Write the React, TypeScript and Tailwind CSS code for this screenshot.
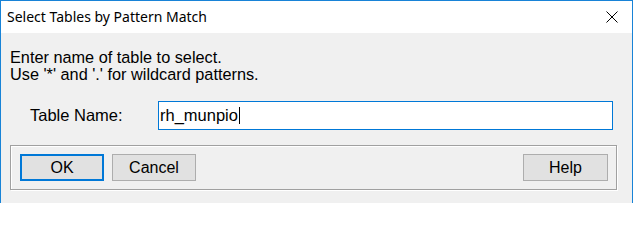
export default function App() {
  return (
    <div className="flex h-[203px] w-[633px] flex-col border-x border-t border-[#1883d7] bg-[#f0f0f0] text-black" style={{ fontFamily: '"Liberation Sans", Arial, sans-serif' }}>
      {/* Title bar */}
      <div className="flex h-[32px] shrink-0 items-center justify-between bg-white pl-[6px] pr-[14px]">
        <div className="text-[14px] leading-none" style={{ fontFamily: '"Noto Sans", "Open Sans", sans-serif' }}>
          Select Tables by Pattern Match
        </div>
        <svg width="12" height="12" viewBox="0 0 12 12" className="mb-[1px]">
          <path d="M0.5 0.5 L11.5 11.5 M11.5 0.5 L0.5 11.5" stroke="#000" strokeWidth="1" fill="none" />
        </svg>
      </div>

      {/* Body */}
      <div className="flex flex-1 flex-col pl-[9px] pr-[15px] pt-[16px]">
        <div className="text-[16.3px] leading-[17px]">
          <div>Enter name of table to select.</div>
          <div>Use '*' and '.' for wildcard patterns.</div>
        </div>

        <div className="mt-[18px] flex items-center">
          <div className="w-[148px] pl-[20px] text-[16.5px] leading-none">Table Name:</div>
          <div className="flex h-[29px] w-[455px] items-center border border-[#0078d7] bg-white pl-[1px] text-[16.5px] leading-none">
            <span>rh_munpio</span>
            <span className="ml-[1px] inline-block h-[17px] w-[1px] bg-black" />
          </div>
        </div>

        <div className="mt-[15px] flex items-start justify-between border border-[#a0a0a0] pb-[8px] pl-[9px] pr-[8px] pt-[8px] shadow-[inset_1px_1px_0_#fff,1px_1px_0_#fff]">
          <div className="flex gap-[8px]">
            <button type="button" className="flex h-[27px] w-[84px] items-center justify-center border-2 border-[#0078d7] bg-[#e1e1e1] text-[16px] leading-none">
              OK
            </button>
            <button type="button" className="flex h-[27px] w-[84px] items-center justify-center border border-[#adadad] bg-[#e1e1e1] text-[16px] leading-none">
              Cancel
            </button>
          </div>
          <button type="button" className="flex h-[27px] w-[85px] items-center justify-center border border-[#adadad] bg-[#e1e1e1] text-[16px] leading-none">
            Help
          </button>
        </div>
      </div>
    </div>
  );
}
